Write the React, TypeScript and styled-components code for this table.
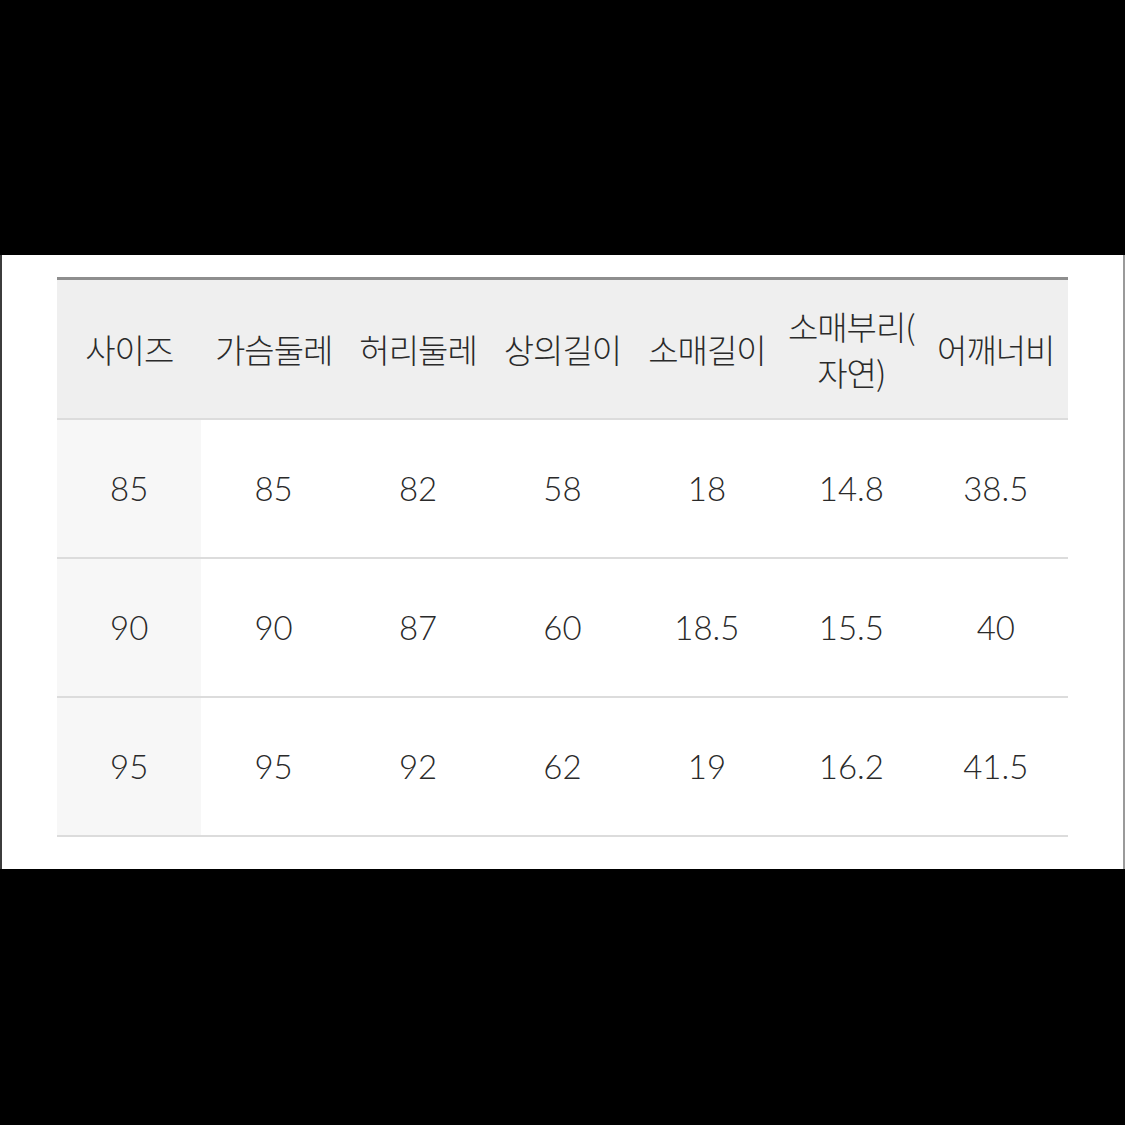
import styled, { createGlobalStyle } from 'styled-components';

const GlobalStyle = createGlobalStyle`
  html, body {
    margin: 0;
    padding: 0;
    background: #000;
  }
`;

const Page = styled.div`
  width: 1125px;
  height: 1125px;
  background: #000;
  padding-top: 255px;
  box-sizing: border-box;
`;

const Panel = styled.div`
  background: #fff;
  height: 614px;
  padding: 22px 57px 0;
  box-sizing: border-box;
  border-left: 2px solid #3c3c3c;
  border-right: 2px solid #9a9a9a;
`;

const Table = styled.table`
  width: 1011px;
  margin-left: -2px;
  border-collapse: collapse;
  table-layout: fixed;
  border-top: 3px solid #8e8e8e;
  font-family: Lato, 'Noto Sans CJK KR', sans-serif;
  font-weight: 300;
  color: #2a2a2a;
`;

const HeadCell = styled.th`
  height: 138px;
  padding: 0;
  background: #efefef;
  border-bottom: 2px solid #dcdcdc;
  font-family: 'Noto Sans CJK KR', sans-serif;
  font-size: 33px;
  font-weight: 300;
  line-height: 46px;
  letter-spacing: -1px;
  text-align: center;
  vertical-align: middle;
  white-space: nowrap;
  color: #2a2a2a;
`;

const Cell = styled.td<{ $first?: boolean }>`
  height: 135px;
  padding: 0 0 2px;
  background: ${(p) => (p.$first ? '#f7f7f7' : '#fff')};
  border-bottom: 2px solid #dcdcdc;
  font-size: 33px;
  text-align: center;
  vertical-align: middle;
`;

const headers: React.ReactNode[] = [
  '사이즈',
  '가슴둘레',
  '허리둘레',
  '상의길이',
  '소매길이',
  <>
    소매부리(
    <br />
    자연)
  </>,
  '어깨너비',
];

const rows = [
  ['85', '85', '82', '58', '18', '14.8', '38.5'],
  ['90', '90', '87', '60', '18.5', '15.5', '40'],
  ['95', '95', '92', '62', '19', '16.2', '41.5'],
];

export default function App() {
  return (
    <Page>
      <GlobalStyle />
      <Panel>
        <Table>
          <thead>
            <tr>
              {headers.map((h, i) => (
                <HeadCell key={i}>{h}</HeadCell>
              ))}
            </tr>
          </thead>
          <tbody>
            {rows.map((row) => (
              <tr key={row[0]}>
                {row.map((value, i) => (
                  <Cell key={i} $first={i === 0}>
                    {value}
                  </Cell>
                ))}
              </tr>
            ))}
          </tbody>
        </Table>
      </Panel>
    </Page>
  );
}
